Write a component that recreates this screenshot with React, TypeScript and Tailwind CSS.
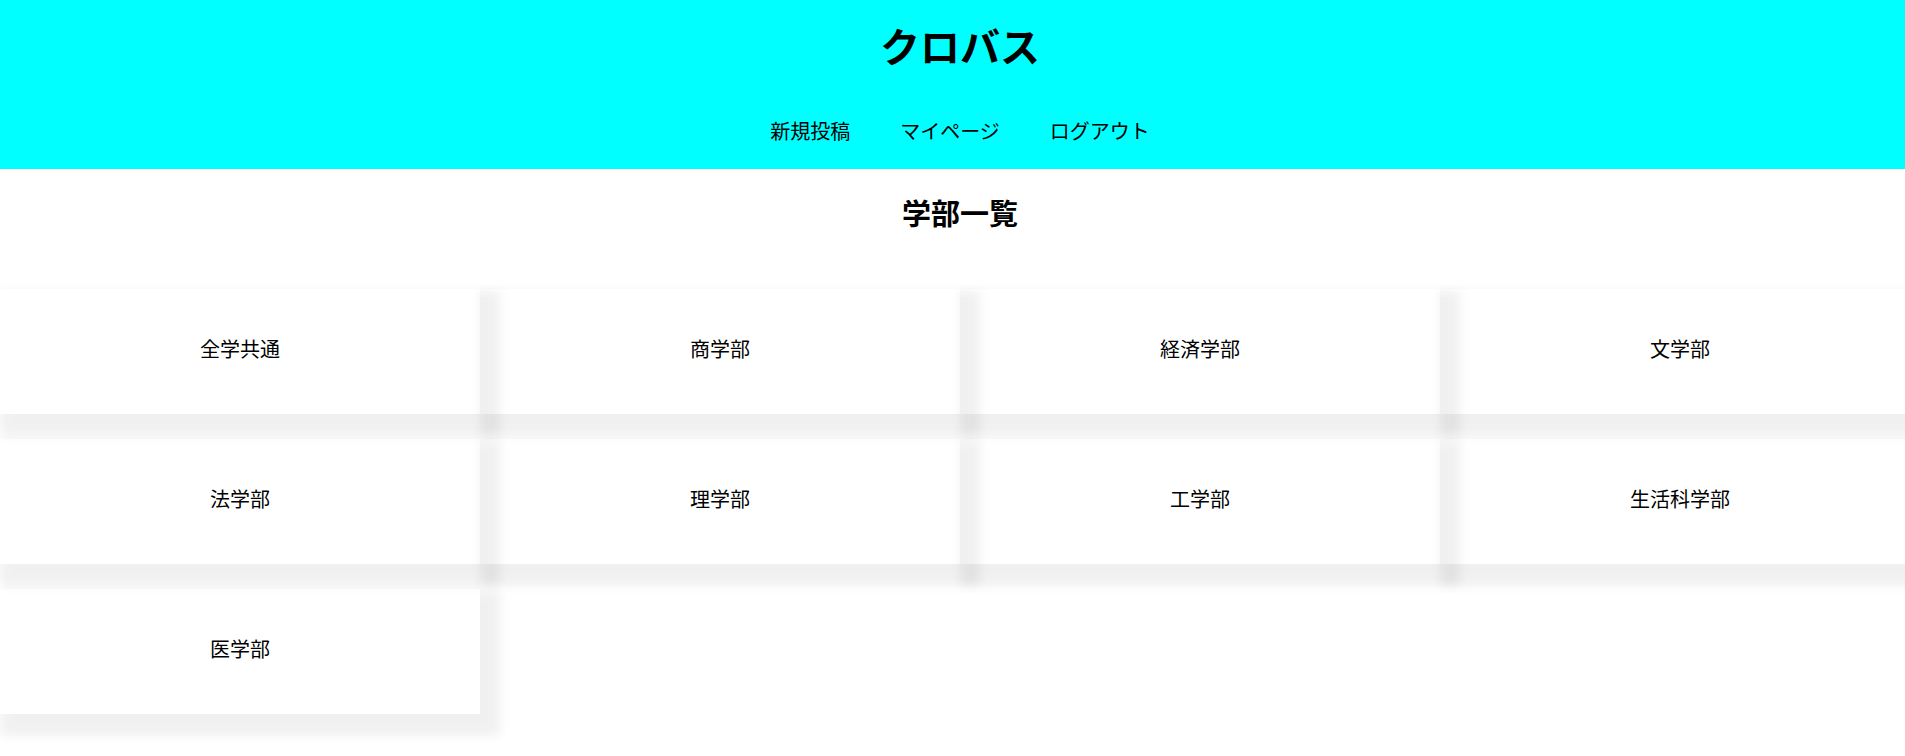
import React from "react";

const faculties = [
  "全学共通",
  "商学部",
  "経済学部",
  "文学部",
  "法学部",
  "理学部",
  "工学部",
  "生活科学部",
  "医学部",
];

export default function App() {
  return (
    <div className="w-full overflow-hidden bg-white text-black [font-family:'Noto_Sans_CJK_JP','Noto_Sans',sans-serif]">
      <div className="w-[1920px] pb-[36px]">
        <header className="flex h-[169px] flex-col items-center bg-[#00ffff] pt-[15px]">
          <h1 className="text-[40px] font-bold leading-[60px]">クロバス</h1>
          <nav className="mt-[41px] flex gap-[50px] text-[20px] leading-[30px]">
            <a>新規投稿</a>
            <a>マイページ</a>
            <a>ログアウト</a>
          </nav>
        </header>
        <h2 className="mt-[23px] text-center text-[29px] font-bold leading-[40px]">学部一覧</h2>
        <div className="mt-[57px] grid grid-cols-4 gap-y-[25px]">
          {faculties.map((f) => (
            <div
              key={f}
              className="flex h-[125px] items-center justify-center pb-[5px] text-[20px] shadow-[10px_12px_10px_10px_rgba(0,0,0,0.06)]"
            >
              {f}
            </div>
          ))}
        </div>
      </div>
    </div>
  );
}
